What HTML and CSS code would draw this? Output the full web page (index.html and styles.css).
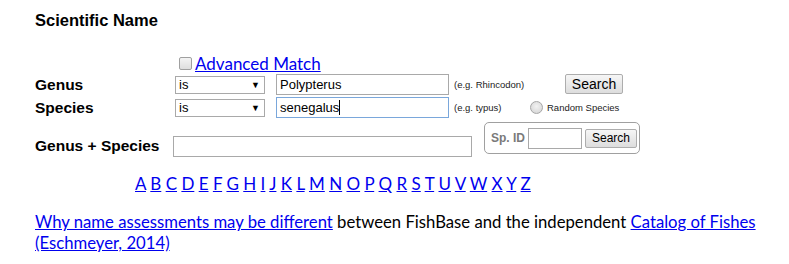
FILE: index.html
```html
<!DOCTYPE html>
<html lang="en">
<head>
    <meta charset="UTF-8">
    <title>Scientific Name</title>
    <link rel="stylesheet" href="styles.css">
</head>
<body>
    <div class="search-form">
        <h2>Scientific Name</h2>

        <div class="match-row">
            <span class="checkbox"></span>
            <a href="#">Advanced Match</a>
        </div>

        <div class="name-grid">
            <label class="field-label">Genus</label>
            <div class="select"><span>is</span><span class="arrow">&#9660;</span></div>
            <div class="text-input">Polypterus</div>
            <span class="hint">(e.g. Rhincodon)</span>
            <div><button class="btn btn-main">Search</button></div>

            <label class="field-label">Species</label>
            <div class="select"><span>is</span><span class="arrow">&#9660;</span></div>
            <div class="text-input focused">senegalus<span class="caret"></span></div>
            <span class="hint">(e.g. typus)</span>
            <div class="random"><span class="radio"></span>Random Species</div>
        </div>

        <div class="combo-row">
            <label class="field-label combo-label">Genus + Species</label>
            <div class="text-input wide"></div>
            <fieldset class="id-box">
                <span class="id-label">Sp. ID</span>
                <div class="text-input small"></div>
                <button class="btn btn-small">Search</button>
            </fieldset>
        </div>

        <div class="alphabet">
            <a href="#">A</a> <a href="#">B</a> <a href="#">C</a> <a href="#">D</a> <a href="#">E</a> <a href="#">F</a> <a href="#">G</a> <a href="#">H</a> <a href="#">I</a> <a href="#">J</a> <a href="#">K</a> <a href="#">L</a> <a href="#">M</a> <a href="#">N</a> <a href="#">O</a> <a href="#">P</a> <a href="#">Q</a> <a href="#">R</a> <a href="#">S</a> <a href="#">T</a> <a href="#">U</a> <a href="#">V</a> <a href="#">W</a> <a href="#">X</a> <a href="#">Y</a> <a href="#">Z</a>
        </div>

        <p class="note">
            <a href="#">Why name assessments may be different</a> between FishBase and the independent <a href="#">Catalog of Fishes (Eschmeyer, 2014)</a>
        </p>
    </div>
</body>
</html>
```

FILE: styles.css
```css
body {
    margin: 0;
    background: #fff;
    color: #000;
    font-family: "Liberation Sans", Arial, sans-serif;
}

a {
    color: #0000ee;
}

.search-form {
    padding: 0 8px 0 35px;
}

h2 {
    font-size: 16.5px;
    font-weight: bold;
    margin: 11px 0 0;
    line-height: 19px;
}

.match-row {
    display: flex;
    align-items: center;
    margin: 24px 0 0 144px;
    height: 19px;
    font-family: Lato, "Noto Sans", sans-serif;
    font-size: 17px;
}

.checkbox {
    width: 11px;
    height: 11px;
    border: 1px solid #a0a0a0;
    border-radius: 2px;
    background: linear-gradient(#f4f4f4, #dedede);
    margin-right: 3px;
}

.name-grid {
    display: grid;
    grid-template-columns: 140px 101px 176px 78px auto;
    grid-auto-rows: 21px;
    row-gap: 2px;
    align-items: center;
    margin-top: 1px;
}

.field-label {
    font-weight: bold;
    font-size: 15.5px;
    white-space: nowrap;
}

.select {
    box-sizing: border-box;
    width: 90px;
    height: 18px;
    border: 1px solid #a9a9a9;
    display: flex;
    justify-content: space-between;
    align-items: center;
    padding: 0 4px 0 3px;
    font-size: 13px;
}

.select .arrow {
    font-size: 9px;
}

.text-input {
    box-sizing: border-box;
    width: 173px;
    height: 21px;
    flex-shrink: 0;
    border: 1px solid #a9a9a9;
    padding: 0 3px;
    font-size: 13px;
    line-height: 19px;
    background: #fff;
}

.text-input.focused {
    border-color: #7aa7db;
}

.caret {
    display: inline-block;
    width: 1px;
    height: 15px;
    background: #000;
    vertical-align: -3px;
}

.hint {
    font-size: 9.5px;
    color: #222;
    padding-left: 2px;
}

.btn {
    font-family: "Liberation Sans", Arial, sans-serif;
    color: #000;
    border: 1px solid #adadad;
    border-radius: 2px;
    background: linear-gradient(#f6f6f6, #dddddd);
    padding: 0;
    flex-shrink: 0;
}

.btn-main {
    width: 58px;
    height: 20px;
    font-size: 14px;
    margin-left: 35px;
    margin-top: -2px;
}

.random {
    display: flex;
    align-items: center;
    font-size: 9.5px;
    color: #222;
}

.radio {
    width: 11px;
    height: 11px;
    border: 1px solid #a6a6a6;
    border-radius: 50%;
    background: radial-gradient(circle at 50% 40%, #f2f2f2, #d2d2d2);
    margin-right: 4px;
}

.combo-row {
    display: flex;
    align-items: flex-end;
    margin-top: 4px;
}

.combo-label {
    width: 138px;
    flex-shrink: 0;
    padding-bottom: 2px;
}

.text-input.wide {
    width: 299px;
}

.id-box {
    display: flex;
    align-items: center;
    box-sizing: border-box;
    width: 156px;
    min-width: 0;
    height: 32px;
    margin: 0 0 3px 12px;
    padding: 0 3px 0 6px;
    border: 1px solid #a0a0a0;
    border-radius: 5px;
    flex-shrink: 0;
}

.id-label {
    font-size: 12px;
    font-weight: bold;
    color: #7a7a7a;
    margin-right: 3px;
    white-space: nowrap;
}

.text-input.small {
    width: 54px;
}

.btn-small {
    width: 52px;
    height: 19px;
    font-size: 12px;
    margin-left: 3px;
}

.alphabet {
    margin: 17px 0 0 100px;
    font-family: Lato, "Noto Sans", sans-serif;
    font-size: 17px;
    line-height: 20px;
}

.note {
    margin: 18px 0 0;
    font-family: Lato, "Noto Sans", sans-serif;
    font-size: 16.7px;
    line-height: 21px;
}
```
